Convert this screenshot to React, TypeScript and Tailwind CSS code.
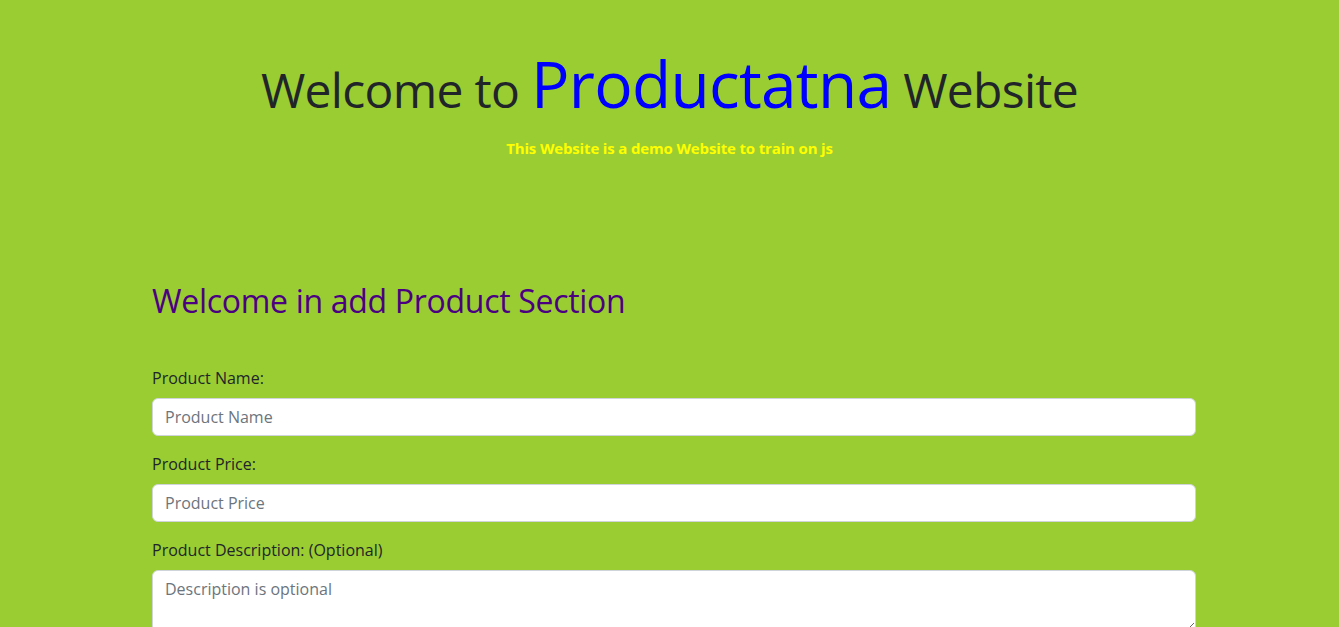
export default function App() {
  return (
    <div className="min-h-screen bg-[#9acd32] font-['Open_Sans',sans-serif] text-[#212529]">
      <header className="pt-[48px] pb-[122px] text-center">
        <h1 className="text-[48px] leading-[72px] font-normal tracking-[-0.7px]">
          Welcome to <span className="text-[64px] text-[#0000ff]">Productatna</span> Website
        </h1>
        <p className="mt-[11px] text-[15px] font-bold tracking-[-0.15px] text-[#ffff00]">
          This Website is a demo Website to train on js
        </p>
      </header>

      <main className="pl-[152px] pr-[143px]">
        <h2 className="text-[32px] leading-[38px] tracking-[-0.3px] text-[#4b0082]">
          Welcome in add Product Section
        </h2>

        <form className="mt-[46px]">
          <div className="mb-4">
            <label className="mb-2 block leading-6">Product Name:</label>
            <input
              type="text"
              placeholder="Product Name"
              className="block h-[38px] w-full rounded-[6px] border border-[#ced4da] bg-white px-3 py-1.5 leading-6 placeholder:text-[#6c757d]"
            />
          </div>
          <div className="mb-4">
            <label className="mb-2 block leading-6">Product Price:</label>
            <input
              type="text"
              placeholder="Product Price"
              className="block h-[38px] w-full rounded-[6px] border border-[#ced4da] bg-white px-3 py-1.5 leading-6 placeholder:text-[#6c757d]"
            />
          </div>
          <div className="mb-4">
            <label className="mb-2 block leading-6">Product Description: (Optional)</label>
            <textarea
              rows={2}
              placeholder="Description is optional"
              className="block w-full rounded-[6px] border border-[#ced4da] bg-white px-3 py-1.5 leading-6 placeholder:text-[#6c757d]"
            />
          </div>
        </form>
      </main>
    </div>
  );
}
